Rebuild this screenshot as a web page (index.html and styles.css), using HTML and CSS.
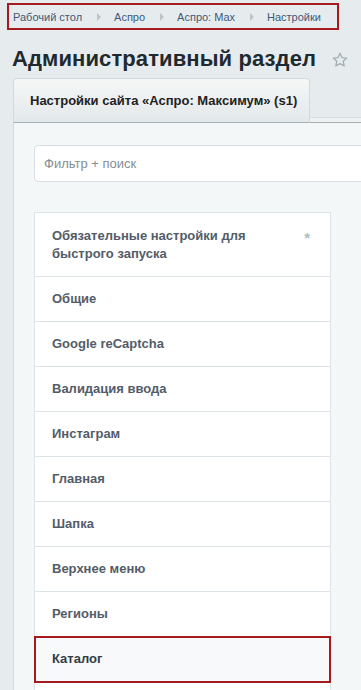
FILE: index.html
```html
<!DOCTYPE html>
<html lang="ru">
<head>
  <meta charset="UTF-8" />
  <meta name="viewport" content="width=device-width, initial-scale=1" />
  <title>Административный раздел</title>
  <link rel="stylesheet" href="styles.css">
</head>
<body>
  <nav class="crumbs">
    <a href="#">Рабочий стол</a>
    <span class="arrow"></span>
    <a href="#">Аспро</a>
    <span class="arrow"></span>
    <a href="#">Аспро: Max</a>
    <span class="arrow"></span>
    <a href="#">Настройки</a>
  </nav>

  <div class="title-row">
    <h1>Административный раздел</h1>
    <svg class="fav" width="16" height="16" viewBox="0 0 16 16">
      <path d="M8 1.2l2 4.4 4.7.5-3.5 3.2 1 4.7L8 11.6 3.8 14l1-4.7L1.3 6.1 6 5.6z" fill="none" stroke="#a3aeb4" stroke-width="1.3" stroke-linejoin="round"/>
    </svg>
  </div>

  <div class="tabs">
    <div class="tab">Настройки сайта «Аспро: Максимум» (s1)</div>
    <div class="tab-rest"></div>
  </div>

  <div class="panel">
    <input class="filter" type="text" placeholder="Фильтр + поиск" />

    <ul class="menu">
      <li class="menu-item">
        <span>Обязательные настройки для быстрого запуска</span>
        <span class="req">*</span>
      </li>
      <li class="menu-item">Общие</li>
      <li class="menu-item">Google reCaptcha</li>
      <li class="menu-item">Валидация ввода</li>
      <li class="menu-item">Инстаграм</li>
      <li class="menu-item">Главная</li>
      <li class="menu-item">Шапка</li>
      <li class="menu-item">Верхнее меню</li>
      <li class="menu-item">Регионы</li>
      <li class="menu-item active">Каталог</li>
      <li class="menu-item empty"></li>
    </ul>
  </div>
</body>
</html>
```

FILE: styles.css
```css
* {
  box-sizing: border-box;
}

body {
  margin: 0;
  font-family: 'Liberation Sans', Arial, sans-serif;
  background: #e6ecee;
  overflow: hidden;
  height: 690px;
}

.crumbs {
  display: flex;
  align-items: center;
  width: 332px;
  height: 27px;
  margin: 3px 0 0 7px;
  padding-left: 4px;
  border: 2px solid #a51a1c;
  font-size: 11px;
}

.crumbs a {
  color: #41597a;
  text-decoration: none;
}

.arrow {
  width: 0;
  height: 0;
  margin: 0 13px 0 15px;
  border-top: 4px solid transparent;
  border-bottom: 4px solid transparent;
  border-left: 4px solid #bcc4c9;
}

.title-row {
  display: flex;
  align-items: center;
  justify-content: space-between;
  padding: 9px 13px 0 12px;
  height: 48px;
}

h1 {
  margin: 0;
  font-size: 22px;
  font-weight: bold;
  color: #1f2a30;
  letter-spacing: 0.1px;
}

.fav {
  margin-top: 2px;
}

.tabs {
  display: flex;
  align-items: flex-end;
  padding-left: 13px;
}

.tab {
  width: 297px;
  height: 45px;
  padding: 14px 0 0 16px;
  border: 1px solid #d3dadd;
  border-bottom: 1px solid #a7b1b5;
  border-radius: 4px 4px 0 0;
  background: linear-gradient(#f6f7f7, #e2e8ea);
  font-size: 13px;
  font-weight: bold;
  color: #222;
}

.tab-rest {
  flex: 1;
  height: 6px;
  border-top: 1px solid #d7dee1;
  border-bottom: 1px solid #a7b1b5;
  background: #eef2f3;
}

.panel {
  margin-left: 13px;
  height: 600px;
  padding: 22px 0 0 20px;
  background: #f4f7f8;
  border-left: 1px solid #d3dadd;
}

.filter {
  display: block;
  width: 340px;
  height: 37px;
  padding: 0 9px;
  border: 1px solid #d8dfe2;
  border-radius: 4px;
  background: #fff;
  font-family: inherit;
  font-size: 13px;
}

.filter::placeholder {
  color: #858d92;
}

.menu {
  list-style: none;
  margin: 30px 0 0;
  padding: 0;
  width: 297px;
  background: #fff;
  border: 1px solid #dde4e8;
  border-bottom: none;
}

.menu-item {
  display: flex;
  justify-content: space-between;
  padding: 13px 16px 13px 17px;
  border-bottom: 1px solid #dde4e8;
  font-size: 13px;
  line-height: 18px;
  font-weight: bold;
  color: #535c69;
}

.menu-item:first-child {
  padding-top: 14px;
}

.menu-item:first-child span:first-child {
  width: 230px;
}

.empty {
  height: 45px;
}

.req {
  color: #adbcc2;
  font-size: 15px;
  margin: 2px 4px 0 0;
}

.active {
  background: #f7f9fa;
  color: #333b44;
  outline: 2px solid #a51a1c;
  outline-offset: -1px;
}
```
